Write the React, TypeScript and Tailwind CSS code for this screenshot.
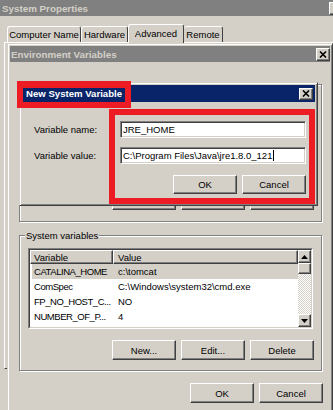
import type { ReactNode } from 'react';

const raised =
  'bg-[#d4d0c8] border border-t-white border-l-white border-r-[#404040] border-b-[#404040] shadow-[inset_-1px_-1px_0_#808080]';

const etched = 'border border-[#808080] shadow-[inset_1px_1px_0_#fff,1px_1px_0_#fff]';

const systemVars = [
  { name: 'CATALINA_HOME', value: 'c:\\tomcat', selected: true },
  { name: 'ComSpec', value: 'C:\\Windows\\system32\\cmd.exe' },
  { name: 'FP_NO_HOST_C...', value: 'NO' },
  { name: 'NUMBER_OF_P...', value: '4' },
];

function CloseBox({ className = '' }: { className?: string }) {
  return (
    <div className={`${raised} flex shrink-0 items-center justify-center ${className}`}>
      <svg width="8" height="7" viewBox="0 0 8 7">
        <path d="M1 0.5 L7 6.5 M7 0.5 L1 6.5" stroke="#000" strokeWidth="1.6" />
      </svg>
    </div>
  );
}

function Button({ label, className = '' }: { label: string; className?: string }) {
  return (
    <div className={`${raised} flex w-[64px] items-center justify-center ${className}`}>
      {label}
    </div>
  );
}

function GroupBox({ label, className = '', children }: { label: string; className?: string; children: ReactNode }) {
  return (
    <fieldset className={`flex flex-col ${etched} ${className}`}>
      <legend className="ml-[5px] bg-[#d4d0c8] px-px leading-[11px]">{label}</legend>
      {children}
    </fieldset>
  );
}

function Arrow({ up }: { up?: boolean }) {
  return (
    <svg width="7" height="4" viewBox="0 0 7 4">
      <path d={up ? 'M3.5 0 L7 4 L0 4Z' : 'M0 0 L7 0 L3.5 4Z'} fill="#000" />
    </svg>
  );
}

function VarList({ rows, className = '' }: { rows: { name: string; value: string; selected?: boolean }[]; className?: string }) {
  return (
    <div className={`border border-t-[#808080] border-l-[#808080] border-r-white border-b-white ${className}`}>
      <div className="flex h-full overflow-hidden border border-t-[#404040] border-l-[#404040] border-r-[#d4d0c8] border-b-[#d4d0c8] bg-white">
        <div className="flex min-w-0 flex-1 flex-col">
          <div className="flex h-[14px] shrink-0">
            <div className={`${raised} flex w-[83px] items-center pl-[3px]`}>Variable</div>
            <div className={`${raised} flex flex-1 items-center pl-[4px]`}>Value</div>
          </div>
          {rows.map((row) => (
            <div
              key={row.name}
              className={`ml-[2px] flex h-[15px] shrink-0 items-center ${row.selected ? 'bg-[#d4d0c8]' : ''}`}
            >
              <span className="w-[84px] shrink-0 pl-[2px] tracking-[-0.45px] whitespace-nowrap">{row.name}</span>
              <span className="pl-[2px] whitespace-nowrap">{row.value}</span>
            </div>
          ))}
        </div>

        {/* Scrollbar */}
        <div className="flex w-[13px] shrink-0 flex-col">
          <div className={`${raised} flex h-[13px] shrink-0 items-center justify-center`}>
            <Arrow up />
          </div>
          <div className={`${raised} h-[11px] shrink-0`} />
          <div className="flex-1 bg-[repeating-conic-gradient(#ffffff_0%_25%,#d4d0c8_0%_50%)] bg-size-[2px_2px]" />
          <div className={`${raised} flex h-[13px] shrink-0 items-center justify-center`}>
            <Arrow />
          </div>
        </div>
      </div>
    </div>
  );
}

export default function App() {
  return (
    <div className="relative h-[410px] w-[333px] overflow-hidden bg-[#d4d0c8] font-['Liberation_Sans',Arial,sans-serif] text-[9.5px] leading-[11px] text-black">
      {/* System Properties title bar */}
      <div className="flex h-[16px] w-[347px] items-center bg-[#808080] pl-[2px] pr-[2px]">
        <span className="text-[9.8px] font-bold text-[#d4d0c8]">System Properties</span>
        <CloseBox className="ml-auto h-[13px] w-[16px]" />
      </div>

      {/* Tabs */}
      <div className="flex h-[26px] items-end pl-[7px]">
        <div className="flex h-[16px] w-[74px] items-center justify-center rounded-t-[3px] border-t border-l border-r border-t-white border-l-white border-r-[#404040]">
          Computer Name
        </div>
        <div className="flex h-[16px] w-[47px] items-center justify-center rounded-t-[3px] border-t border-l border-r border-t-white border-l-white border-r-[#404040]">
          Hardware
        </div>
        <div className="relative z-10 -mb-px flex h-[19px] w-[56px] items-center justify-center rounded-t-[3px] border-t border-l border-r border-t-white border-l-white border-r-[#404040] bg-[#d4d0c8] pb-[2px]">
          Advanced
        </div>
        <div className="flex h-[16px] w-[39px] items-center justify-center rounded-t-[3px] border-t border-r border-t-white border-r-[#404040]">
          Remote
        </div>
      </div>
      <div className="ml-[4px] h-[327px] border-t border-l border-b border-t-white border-l-white border-b-[#404040]" />

      {/* Environment Variables window */}
      <div className="absolute left-[7px] top-[43px] flex h-[380px] w-[326px] flex-col border border-t-[#d4d0c8] border-l-[#d4d0c8] border-r-[#404040] border-b-[#404040] bg-[#d4d0c8] p-[2px] shadow-[inset_1px_1px_0_#fff,inset_-1px_-1px_0_#808080]">
        <div className="flex h-[16px] shrink-0 items-center bg-[#808080] pl-px">
          <span className="text-[9.8px] font-bold text-[#d4d0c8]">Environment Variables</span>
          <CloseBox className="ml-auto h-[13px] w-[14px]" />
        </div>

        <div className="flex flex-col pl-[9px] pr-[8px]">
          {/* User variables group, hidden behind the dialog */}
          <div className={`mt-[22px] flex h-[138px] flex-col ${etched}`}>
            <div className="mx-[8px] mt-[7px] flex-1 border border-t-[#808080] border-l-[#808080] border-r-white border-b-white bg-white" />
            <div className="mt-[11px] mb-[11px] flex justify-end gap-[5px] pr-[7px]">
              <div className={`${raised} h-[20px] w-[64px]`} />
              <div className={`${raised} h-[20px] w-[64px]`} />
              <div className={`${raised} h-[20px] w-[64px]`} />
            </div>
          </div>

          <GroupBox label="System variables" className="mt-[8px]">
            <VarList rows={systemVars} className="ml-[8px] mr-[8px] mt-[7px] h-[81px]" />
            <div className="mt-[11px] mb-[10px] flex justify-end gap-[5px] pr-[7px]">
              <Button label="New..." className="h-[20px]" />
              <Button label="Edit..." className="h-[20px]" />
              <Button label="Delete" className="h-[20px]" />
            </div>
          </GroupBox>

          <div className="-mr-px mt-[12px] flex justify-end gap-[5px]">
            <Button label="OK" className="h-[20px]" />
            <Button label="Cancel" className="h-[20px]" />
          </div>
        </div>
      </div>

      {/* New System Variable dialog */}
      <div className="absolute left-[19px] top-[82px] flex h-[124px] w-[299px] flex-col border border-t-[#d4d0c8] border-l-[#d4d0c8] border-r-[#404040] border-b-[#404040] bg-[#d4d0c8] p-[2px] shadow-[inset_1px_1px_0_#fff,inset_-1px_-1px_0_#808080]">
        <div className="flex h-[17px] shrink-0 items-center bg-[#0a246a] pl-[4px] pr-[2px]">
          <span className="text-[9.6px] font-bold text-white">New System Variable</span>
          <CloseBox className="ml-auto h-[12px] w-[14px]" />
        </div>

        <div className="flex flex-col pl-[12px] pr-[9px]">
          <div className="mt-[19px] flex h-[17px] items-center">
            <span className="w-[86px] shrink-0">Variable name:</span>
            <div className="flex h-full flex-1 items-center border border-t-[#808080] border-l-[#808080] border-r-white border-b-white bg-white pl-[2px] shadow-[inset_1px_1px_0_#404040,inset_-1px_-1px_0_#d4d0c8]">
              JRE_HOME
            </div>
          </div>
          <div className="mt-[9px] flex h-[17px] items-center">
            <span className="w-[86px] shrink-0">Variable value:</span>
            <div className="flex h-full flex-1 items-center border border-t-[#808080] border-l-[#808080] border-r-white border-b-white bg-white pl-[2px] shadow-[inset_1px_1px_0_#404040,inset_-1px_-1px_0_#d4d0c8]">
              C:\Program Files\Java\jre1.8.0_121
              <span className="ml-px inline-block h-[11px] w-px bg-black" />
            </div>
          </div>
          <div className="mt-[11px] flex justify-end gap-[5px]">
            <Button label="OK" className="h-[19px]" />
            <Button label="Cancel" className="h-[19px]" />
          </div>
        </div>
      </div>

      {/* Red annotation boxes */}
      <div className="absolute left-[17px] top-[81px] h-[27px] w-[114px] border-[6px] border-t-[7px] border-[#ed1c24]" />
      <div className="absolute left-[109px] top-[109px] h-[95px] w-[206px] border-[6px] border-[#ed1c24]" />
    </div>
  );
}
